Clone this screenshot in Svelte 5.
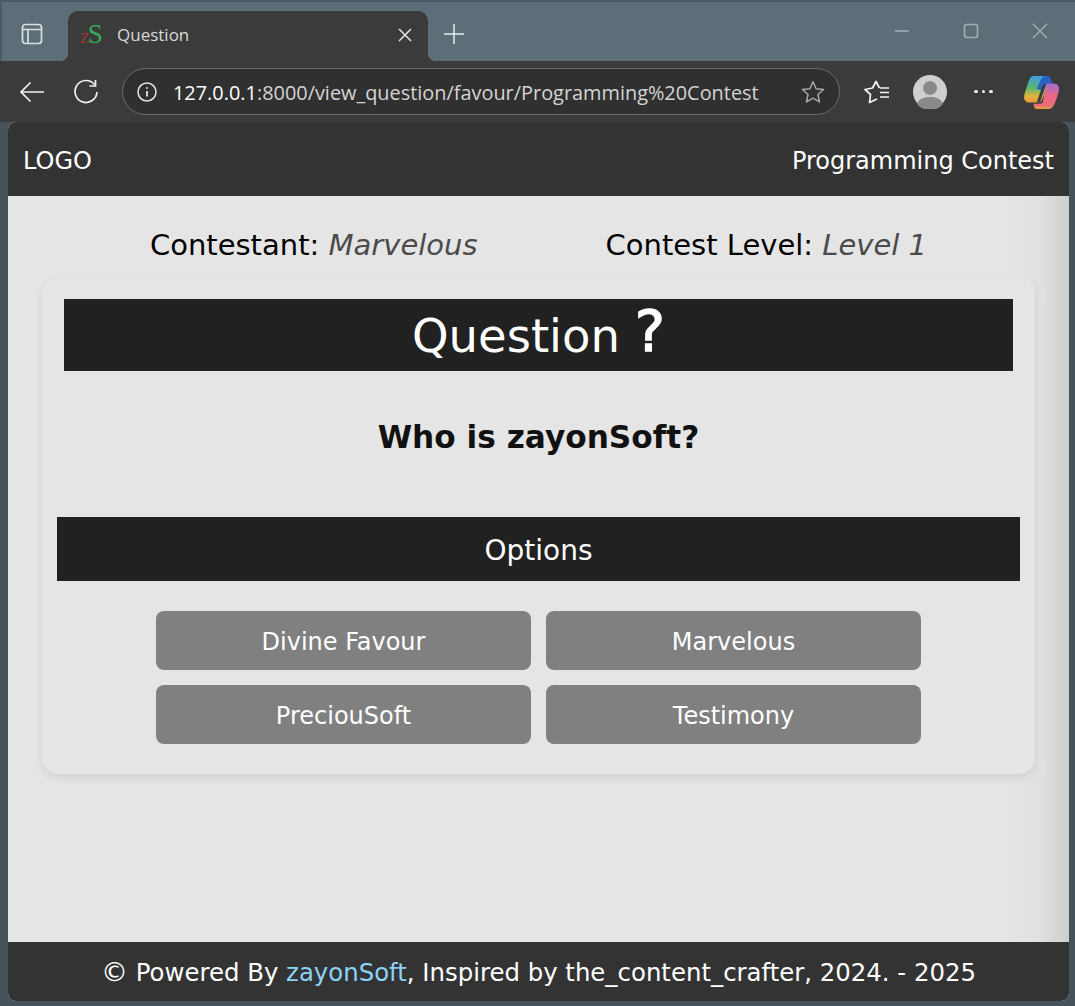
<script>
	const options = ['Divine Favour', 'Marvelous', 'PreciouSoft', 'Testimony'];
</script>

<div class="window">
	<div class="tabstrip">
		<svg class="tab-actions" viewBox="0 0 24 24" width="24" height="24" fill="none" stroke="#dcdfe0" stroke-width="1.7">
			<rect x="2.5" y="2.5" width="19" height="19" rx="3" />
			<path d="M3 7.5h18M8 7.5v13.5" />
		</svg>
		<div class="tab">
			<span class="favicon"><span class="fav-z">z</span><span class="fav-s">S</span></span>
			<span class="tab-title">Question</span>
			<svg class="tab-close" viewBox="0 0 14 14" width="14" height="14" stroke="#e6e6e6" stroke-width="1.5">
				<path d="M1 1l12 12M13 1L1 13" />
			</svg>
		</div>
		<svg class="new-tab" viewBox="0 0 20 20" width="20" height="20" stroke="#e8ecee" stroke-width="1.5">
			<path d="M10 0v20M0 10h20" />
		</svg>
		<div class="win-controls">
			<svg viewBox="0 0 16 16" width="16" height="16" stroke="#a4afb4" stroke-width="1.5"><path d="M1 8h14" /></svg>
			<svg viewBox="0 0 16 16" width="16" height="16" fill="none" stroke="#a4afb4" stroke-width="1.6"><rect x="1.5" y="1.5" width="13" height="13" rx="2.5" /></svg>
			<svg viewBox="0 0 16 16" width="16" height="16" stroke="#a4afb4" stroke-width="1.4"><path d="M1 1l14 14M15 1L1 15" /></svg>
		</div>
	</div>

	<div class="toolbar">
		<svg class="back" viewBox="0 0 26 22" width="26" height="22" fill="none" stroke="#f2f2f2" stroke-width="1.7">
			<path d="M25 11H2M11.5 1.5L2 11l9.5 9.5" />
		</svg>
		<svg class="reload" viewBox="0 0 26 26" width="26" height="26" fill="none" stroke="#f2f2f2" stroke-width="1.7">
			<path d="M21.5 5.5A11 11 0 1 0 24 13" />
			<path d="M22.5 1v6h-6" />
		</svg>
		<div class="address">
			<svg viewBox="0 0 20 20" width="20" height="20" fill="none" stroke="#e6e6e6" stroke-width="1.5">
				<circle cx="10" cy="10" r="9" />
				<path d="M10 9v5.5M10 5.2v1.6" stroke-width="1.8" />
			</svg>
			<span class="url"><span class="host">127.0.0.1</span>:8000/view_question/favour/Programming%20Contest</span>
			<svg class="star" viewBox="0 0 24 24" width="24" height="24" fill="none" stroke="#a8a8a8" stroke-width="1.5" stroke-linejoin="round">
				<path d="M12 1.8l3.1 6.9 7.4.8-5.5 5 1.5 7.4-6.5-3.8-6.5 3.8L7 14.500l-5.500-5 7.400-.8z" />
			</svg>
		</div>
		<svg class="favs" viewBox="0 0 27 24" width="27" height="24" fill="none" stroke="#f5f5f5" stroke-width="1.7" stroke-linejoin="round">
			<path d="M16.5 8L13 1.500 9.500 8 2 9.500l5.500 5-1 8L14 19" />
			<path d="M17 8h9M17 12.500h9M17 17h9" />
		</svg>
		<svg class="avatar" viewBox="0 0 34 34" width="34" height="34">
			<circle cx="17" cy="17" r="17" fill="#cfcfcf" />
			<circle cx="17" cy="13" r="7" fill="#8a8a8a" />
			<path d="M4 29c2-6 8-7 13-7s11 1 13 7a17 17 0 0 1-26 0z" fill="#8a8a8a" />
		</svg>
		<span class="more"><i></i><i></i><i></i></span>
		<svg class="copilot" viewBox="0 0 34 34" width="36" height="36">
			<defs>
				<linearGradient id="cpa" x1="0" y1="0" x2="0" y2="1">
					<stop offset="0" stop-color="#3f9be4" />
					<stop offset=".45" stop-color="#58b86f" />
					<stop offset=".75" stop-color="#e3b23c" />
					<stop offset="1" stop-color="#e89a3a" />
				</linearGradient>
				<linearGradient id="cpb" x1="0" y1="0" x2="0" y2="1">
					<stop offset="0" stop-color="#9a6fd0" />
					<stop offset=".45" stop-color="#e9678a" />
					<stop offset=".85" stop-color="#ee6a78" />
					<stop offset="1" stop-color="#e8a33c" />
				</linearGradient>
			</defs>
			<path d="M10 2h12c2 0 3 1 4 3l-8 19c-1 2-2 3-4 3H6c-3 0-5-2-5-5 0-2 1-6 3-11 2-6 3-9 6-9z" fill="url(#cpa)" />
			<path d="M22 2c3 0 4 2 5 5l1 3h-6l-3 6-6-2 4-9c1-2 3-3 5-3z" fill="#2a62c4" />
			<path d="M22 9h7c3 0 5 2 5 5 0 2-1 6-3 11-2 6-4 8-7 8H13c-2 0-3-2-3-5h6c2 0 3-1 3-3z" fill="url(#cpb)" />
			<path d="M22 9l-5 15c-.5 2-2 3-4 3l5-15c.6-2 2-3 4-3z" fill="#3b3b3b" />
		</svg>
	</div>

	<div class="page">
		<header class="topbar">
			<span>LOGO</span>
			<span>Programming Contest</span>
		</header>

		<main class="content">
			<div class="meta">
				<div>Contestant: <em>Marvelous</em></div>
				<div>Contest Level: <em>Level 1</em></div>
			</div>

			<section class="card">
				<h1>Question <span class="qmark">?</span></h1>
				<p class="prompt">Who is zayonSoft?</p>
				<h2>Options</h2>
				<div class="options">
					{#each options as option}
						<button type="button">{option}</button>
					{/each}
				</div>
			</section>
		</main>

		<footer class="bottom">
			<span class="copy">©</span> Powered By <a href="#top">zayonSoft</a>, Inspired by the_content_crafter, 2024. - 2025
		</footer>
	</div>
</div>

<style>
	:global(body) {
		margin: 0;
		background: #46535b;
	}

	.window {
		width: 1075px;
		height: 1006px;
		display: flex;
		flex-direction: column;
		box-sizing: border-box;
		background: #46535b;
		overflow: hidden;
	}

	.tabstrip {
		height: 61px;
		flex: none;
		box-sizing: border-box;
		display: flex;
		align-items: flex-end;
		background: #5c6e77;
		border-top: 2px solid #4c5b63;
		border-left: 2px solid #4c5b63;
	}

	.tab-actions {
		margin: 0 24px 15px 18px;
		flex: none;
	}

	.tab {
		position: relative;
		width: 360px;
		height: 50px;
		box-sizing: border-box;
		padding: 0 16px 3px 12px;
		display: flex;
		align-items: center;
		background: #3b3b3b;
		border-radius: 10px 10px 0 0;
		flex: none;
	}

	.tab::before,
	.tab::after {
		content: '';
		position: absolute;
		bottom: 0;
		width: 8px;
		height: 8px;
	}

	.tab::before {
		left: -8px;
		background: radial-gradient(circle at 0 0, transparent 8px, #3b3b3b 8.5px);
	}

	.tab::after {
		right: -8px;
		background: radial-gradient(circle at 100% 0, transparent 8px, #3b3b3b 8.5px);
	}

	.favicon {
		width: 26px;
		display: flex;
		align-items: baseline;
		font-family: 'Liberation Serif', serif;
		line-height: 1;
	}

	.fav-z {
		color: #8c3a2c;
		font-size: 22px;
	}

	.fav-s {
		color: #38a85a;
		font-size: 27px;
		margin-left: -2px;
	}

	.tab-title {
		flex: 1;
		margin-left: 11px;
		font: 17px 'Open Sans', sans-serif;
		color: #d8d8d8;
	}

	.new-tab {
		margin: 0 0 17px 16px;
		flex: none;
	}

	.win-controls {
		margin: 0 27px 22px auto;
		display: flex;
		gap: 53px;
	}

	.toolbar {
		height: 61px;
		flex: none;
		box-sizing: border-box;
		display: flex;
		align-items: center;
		padding: 0 14px 0 19px;
		background: #3b3b3b;
		color: #fff;
	}

	.reload {
		margin-left: 28px;
	}

	.address {
		margin-left: 23px;
		width: 718px;
		height: 47px;
		box-sizing: border-box;
		display: flex;
		align-items: center;
		padding: 0 14px;
		border: 1.5px solid #6c6c6c;
		border-radius: 24px;
		background: #303030;
		color: #d4d4d4;
		font: 19.9px 'Open Sans', sans-serif;
	}

	.url {
		flex: 1;
		margin-left: 16px;
		padding-top: 1px;
		white-space: nowrap;
	}

	.host {
		color: #fff;
	}

	.favs {
		margin-left: 23px;
	}

	.avatar {
		margin-left: 23px;
	}

	.more {
		margin-left: 27px;
		display: flex;
		gap: 4px;
	}

	.more i {
		width: 3.5px;
		height: 3.500px;
		background: #f0f0f0;
		border-radius: 50%;
	}

	.copilot {
		margin-left: 30px;
	}

	.page {
		flex: 1;
		margin: 0 6px 5px 8px;
		display: flex;
		flex-direction: column;
		border-radius: 8px;
		overflow: hidden;
		background: #e5e5e5;
		font-family: 'DejaVu Sans', Verdana, sans-serif;
	}

	.topbar {
		height: 74px;
		flex: none;
		box-sizing: border-box;
		padding: 4px 15px 0;
		display: flex;
		align-items: center;
		justify-content: space-between;
		background: #333;
		color: #fff;
		font-size: 24px;
	}

	.content {
		flex: 1;
		box-sizing: border-box;
		padding: 32px 34px 0;
		background: linear-gradient(to right, #e5e5e5 94%, #e0e0e0 97.500%, #cdcdcd 100%);
	}

	.meta {
		display: flex;
		justify-content: center;
		gap: 128px;
		font-size: 29px;
		line-height: 34px;
		margin-bottom: 15px;
		color: #000;
	}

	.meta em {
		color: #4b4b4b;
	}

	.card {
		box-sizing: border-box;
		height: 497px;
		padding: 22px 15px 0;
		background: #e5e5e5;
		border-radius: 16px;
		box-shadow: 0 4px 8px rgba(0, 0, 0, 0.08);
	}

	h1 {
		margin: 0 7px;
		height: 72px;
		background: #212121;
		color: #fff;
		font-size: 46.5px;
		font-weight: 400;
		line-height: 74px;
		text-align: center;
	}

	.qmark {
		font-size: 57px;
		line-height: 1;
		-webkit-text-stroke: 1.4px #fff;
	}

	.prompt {
		margin: 48px 0 62px;
		color: #111;
		font-size: 31.2px;
		font-weight: 700;
		line-height: 36px;
		text-align: center;
	}

	h2 {
		margin: 0 0 30px;
		height: 64px;
		background: #212121;
		color: #fff;
		font-size: 28px;
		font-weight: 400;
		line-height: 67px;
		text-align: center;
	}

	.options {
		display: grid;
		grid-template-columns: 375px 375px;
		justify-content: center;
		gap: 15px;
	}

	button {
		height: 59px;
		padding: 2px 0 0;
		border: none;
		border-radius: 8px;
		background: #808080;
		color: #fff;
		font: 24px 'DejaVu Sans', Verdana, sans-serif;
	}

	.bottom {
		height: 59px;
		flex: none;
		box-sizing: border-box;
		background: #333;
		color: #fff;
		font-size: 24.4px;
		line-height: 61px;
		text-align: center;
		white-space: nowrap;
	}

	.copy {
		font-size: 27px;
		line-height: 0;
	}

	.bottom a {
		color: #8dd2f8;
		text-decoration: none;
	}
</style>
